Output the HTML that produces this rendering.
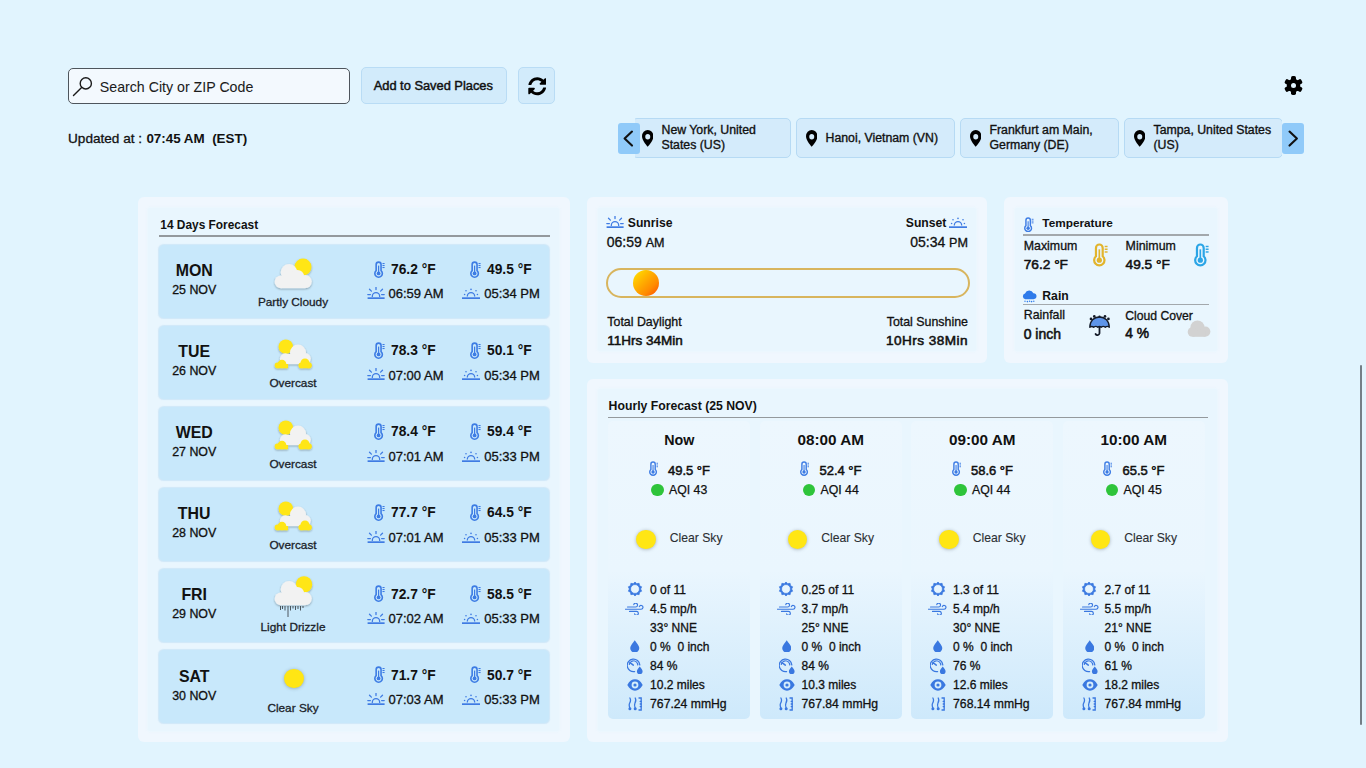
<!DOCTYPE html><html><head><meta charset="utf-8"><style>html,body{margin:0;padding:0;width:1366px;height:768px;overflow:hidden;background:#e1f4fe;}body{font-family:"Liberation Sans", sans-serif;position:relative;}.t{position:absolute;white-space:nowrap;line-height:1;}</style></head><body>
<div style="position:absolute;left:68px;top:68px;width:282px;height:36px;box-sizing:border-box;border:1.5px solid #4e555c;border-radius:5px;background:#f3f9fe;"></div>
<svg style="position:absolute;left:72px;top:76px;" width="22" height="22" viewBox="0 0 22 22"><circle cx="13.8" cy="7.4" r="5.6" fill="none" stroke="#1a1a1a" stroke-width="1.4"/><line x1="9.6" y1="11.6" x2="1.5" y2="19.6" stroke="#1a1a1a" stroke-width="1.4" stroke-linecap="round"/></svg>
<div class="t" style="left:99.80px;top:79.98px;font-size:14.2px;font-weight:400;color:#1c1c1c;-webkit-text-stroke:0.05px #1c1c1c;">Search City or ZIP Code</div>
<div style="position:absolute;left:361px;top:67px;width:146px;height:37px;box-sizing:border-box;border:1px solid #b9dcf5;border-radius:5px;background:#d2ebfb;"></div>
<div class="t" style="left:373.70px;top:79.72px;font-size:12.85px;font-weight:400;color:#111;-webkit-text-stroke:0.45px #111;">Add to Saved Places</div>
<div style="position:absolute;left:518px;top:67px;width:37px;height:37px;box-sizing:border-box;border:1px solid #b9dcf5;border-radius:5px;background:#d2ebfb;"></div>
<svg style="position:absolute;left:527.5px;top:77.3px;" width="18.5" height="18.5" viewBox="0 0 512 512"><path fill="#000" d="M370.72 133.28C339.458 104.008 298.888 87.962 255.848 88c-77.458.068-144.328 53.178-162.791 126.85-1.344 5.363-6.122 9.15-11.651 9.15H24.103c-7.498 0-13.194-6.807-11.807-14.176C33.933 94.924 134.813 8 256 8c66.448 0 126.791 26.136 171.315 68.685L463.03 40.97C478.149 25.851 504 36.559 504 57.941V192c0 13.255-10.745 24-24 24H345.941c-21.382 0-32.09-25.851-16.971-40.971l41.75-41.749zM32 296h134.059c21.382 0 32.09 25.851 16.971 40.971l-41.75 41.75c31.262 29.273 71.835 45.319 114.876 45.28 77.418-.07 144.315-53.144 162.787-126.849 1.344-5.363 6.122-9.15 11.651-9.15h57.304c7.498 0 13.194 6.807 11.807 14.176C478.067 417.076 377.187 504 256 504c-66.448 0-126.791-26.136-171.315-68.685L48.97 471.03C33.851 486.149 8 475.441 8 454.059V320c0-13.255 10.745-24 24-24z"/></svg>
<div class="t" style="left:68.00px;top:132.19px;font-size:13.6px;font-weight:400;color:#111;-webkit-text-stroke:0.3px #111;">Updated at :</div>
<div class="t" style="left:146.40px;top:132.36px;font-size:13.4px;font-weight:700;color:#111;">07:45 AM&nbsp;&nbsp;(EST)</div>
<svg style="position:absolute;left:1284.4px;top:76.2px;" width="19" height="19" viewBox="-9.5 -9.5 19 19"><g fill="#000"><rect x="-2.5" y="-9.5" width="5" height="6" rx="1.7" transform="rotate(0)"/><rect x="-2.5" y="-9.5" width="5" height="6" rx="1.7" transform="rotate(60)"/><rect x="-2.5" y="-9.5" width="5" height="6" rx="1.7" transform="rotate(120)"/><rect x="-2.5" y="-9.5" width="5" height="6" rx="1.7" transform="rotate(180)"/><rect x="-2.5" y="-9.5" width="5" height="6" rx="1.7" transform="rotate(240)"/><rect x="-2.5" y="-9.5" width="5" height="6" rx="1.7" transform="rotate(300)"/><circle r="6.7"/></g><circle r="2.5" fill="#e1f4fe"/></svg>
<div style="position:absolute;left:635px;top:110px;width:647px;height:56px;overflow:hidden">
<div style="position:absolute;left:-3.5px;top:8.3px;width:159px;height:40px;box-sizing:border-box;border:1.5px solid #b6daf4;border-radius:5px;background:#d4ebfb"></div>
<div style="position:absolute;left:160.5px;top:8.3px;width:159px;height:40px;box-sizing:border-box;border:1.5px solid #b6daf4;border-radius:5px;background:#d4ebfb"></div>
<div style="position:absolute;left:324.5px;top:8.3px;width:159px;height:40px;box-sizing:border-box;border:1.5px solid #b6daf4;border-radius:5px;background:#d4ebfb"></div>
<div style="position:absolute;left:488.5px;top:8.3px;width:159px;height:40px;box-sizing:border-box;border:1.5px solid #b6daf4;border-radius:5px;background:#d4ebfb"></div>
</div>
<svg style="position:absolute;left:641.70px;top:130px;" width="11.5" height="16.8" viewBox="0 0 12 16" preserveAspectRatio="none"><path fill="#000" d="M6 16s6-5.686 6-10A6 6 0 0 0 0 6c0 4.314 6 10 6 10zm0-7a2.6 2.6 0 1 1 0-5.2 2.6 2.6 0 0 1 0 5.2z"/></svg>
<div class="t" style="left:661.50px;top:124.09px;font-size:12.3px;font-weight:400;color:#111;-webkit-text-stroke:0.35px #111;">New York, United</div>
<div class="t" style="left:661.50px;top:139.09px;font-size:12.3px;font-weight:400;color:#111;-webkit-text-stroke:0.35px #111;">States (US)</div>
<svg style="position:absolute;left:805.70px;top:130px;" width="11.5" height="16.8" viewBox="0 0 12 16" preserveAspectRatio="none"><path fill="#000" d="M6 16s6-5.686 6-10A6 6 0 0 0 0 6c0 4.314 6 10 6 10zm0-7a2.6 2.6 0 1 1 0-5.2 2.6 2.6 0 0 1 0 5.2z"/></svg>
<div class="t" style="left:825.50px;top:131.89px;font-size:12.3px;font-weight:400;color:#111;-webkit-text-stroke:0.35px #111;">Hanoi, Vietnam (VN)</div>
<svg style="position:absolute;left:969.70px;top:130px;" width="11.5" height="16.8" viewBox="0 0 12 16" preserveAspectRatio="none"><path fill="#000" d="M6 16s6-5.686 6-10A6 6 0 0 0 0 6c0 4.314 6 10 6 10zm0-7a2.6 2.6 0 1 1 0-5.2 2.6 2.6 0 0 1 0 5.2z"/></svg>
<div class="t" style="left:989.50px;top:124.09px;font-size:12.3px;font-weight:400;color:#111;-webkit-text-stroke:0.35px #111;">Frankfurt am Main,</div>
<div class="t" style="left:989.50px;top:139.09px;font-size:12.3px;font-weight:400;color:#111;-webkit-text-stroke:0.35px #111;">Germany (DE)</div>
<svg style="position:absolute;left:1133.70px;top:130px;" width="11.5" height="16.8" viewBox="0 0 12 16" preserveAspectRatio="none"><path fill="#000" d="M6 16s6-5.686 6-10A6 6 0 0 0 0 6c0 4.314 6 10 6 10zm0-7a2.6 2.6 0 1 1 0-5.2 2.6 2.6 0 0 1 0 5.2z"/></svg>
<div class="t" style="left:1153.50px;top:124.09px;font-size:12.3px;font-weight:400;color:#111;-webkit-text-stroke:0.35px #111;">Tampa, United States</div>
<div class="t" style="left:1153.50px;top:139.09px;font-size:12.3px;font-weight:400;color:#111;-webkit-text-stroke:0.35px #111;">(US)</div>
<div style="position:absolute;left:618.2px;top:123.2px;width:21.5px;height:30.8px;background:#90caf9;border-radius:3px;"></div>
<svg style="position:absolute;left:618.2px;top:123.2px;" width="21.5" height="30.8" viewBox="0 0 21.5 30.8"><polyline points="14,8.6 6.6,15.6 14,22.6" fill="none" stroke="#111" stroke-width="2.1" stroke-linecap="round" stroke-linejoin="round"/></svg>
<div style="position:absolute;left:1282px;top:123.2px;width:21.5px;height:30.8px;background:#90caf9;border-radius:3px;"></div>
<svg style="position:absolute;left:1282px;top:123.2px;" width="21.5" height="30.8" viewBox="0 0 21.5 30.8"><polyline points="7.5,8.6 14.9,15.6 7.5,22.6" fill="none" stroke="#111" stroke-width="2.1" stroke-linecap="round" stroke-linejoin="round"/></svg>
<div style="position:absolute;left:137.5px;top:197px;width:432.5px;height:545px;box-sizing:border-box;border-radius:6px;background:#f0f7fe;"></div>
<div style="position:absolute;left:148.0px;top:207.5px;width:411.0px;height:523px;background:#e9f6fe;border-radius:2px;box-shadow:0 0 2px 1px rgba(233,246,254,0.8);"></div>
<div style="position:absolute;left:587px;top:197px;width:400px;height:165.5px;box-sizing:border-box;border-radius:6px;background:#f0f7fe;"></div>
<div style="position:absolute;left:597.5px;top:207.5px;width:378.5px;height:143.5px;background:#e9f6fe;border-radius:2px;box-shadow:0 0 2px 1px rgba(233,246,254,0.8);"></div>
<div style="position:absolute;left:1004px;top:197px;width:224px;height:165.5px;box-sizing:border-box;border-radius:6px;background:#f0f7fe;"></div>
<div style="position:absolute;left:1014.5px;top:207.5px;width:202.5px;height:143.5px;background:#e9f6fe;border-radius:2px;box-shadow:0 0 2px 1px rgba(233,246,254,0.8);"></div>
<div style="position:absolute;left:587px;top:378.5px;width:641px;height:363.5px;box-sizing:border-box;border-radius:6px;background:#f0f7fe;"></div>
<div style="position:absolute;left:597.5px;top:389.0px;width:619.5px;height:341.5px;background:#e9f6fe;border-radius:2px;box-shadow:0 0 2px 1px rgba(233,246,254,0.8);"></div>
<div class="t" style="left:160.30px;top:219.53px;font-size:11.9px;font-weight:700;color:#111;">14 Days Forecast</div>
<div style="position:absolute;left:159px;top:235.2px;width:391px;height:1.4px;background:#94999d;"></div>
<div style="position:absolute;left:159.4px;top:244.70px;width:389.2px;height:73.3px;border-radius:5px;background:#c8e8fb;box-shadow:0 0 1px 0.5px rgba(150,200,235,0.3);"></div>
<div style="position:absolute;left:159.4px;top:325.80px;width:389.2px;height:73.3px;border-radius:5px;background:#c8e8fb;box-shadow:0 0 1px 0.5px rgba(150,200,235,0.3);"></div>
<div style="position:absolute;left:159.4px;top:406.90px;width:389.2px;height:73.3px;border-radius:5px;background:#c8e8fb;box-shadow:0 0 1px 0.5px rgba(150,200,235,0.3);"></div>
<div style="position:absolute;left:159.4px;top:488.00px;width:389.2px;height:73.3px;border-radius:5px;background:#c8e8fb;box-shadow:0 0 1px 0.5px rgba(150,200,235,0.3);"></div>
<div style="position:absolute;left:159.4px;top:569.10px;width:389.2px;height:73.3px;border-radius:5px;background:#c8e8fb;box-shadow:0 0 1px 0.5px rgba(150,200,235,0.3);"></div>
<div style="position:absolute;left:159.4px;top:650.20px;width:389.2px;height:73.3px;border-radius:5px;background:#c8e8fb;box-shadow:0 0 1px 0.5px rgba(150,200,235,0.3);"></div>
<div class="t" style="left:-5.80px;width:400px;text-align:center;top:263.04px;font-size:15.9px;font-weight:700;color:#111;">MON</div>
<div class="t" style="left:-5.80px;width:400px;text-align:center;top:284.00px;font-size:12.4px;font-weight:400;color:#111;-webkit-text-stroke:0.3px #111;">25 NOV</div>
<svg style="position:absolute;left:273px;top:256.70px;" width="42" height="36" viewBox="0 0 42 36"><defs><filter id="f1" x="-30%" y="-30%" width="160%" height="160%"><feGaussianBlur in="SourceAlpha" stdDeviation="1.3"/><feOffset dy="0.9"/><feComponentTransfer><feFuncA type="linear" slope="0.33"/></feComponentTransfer><feMerge><feMergeNode/><feMergeNode in="SourceGraphic"/></feMerge></filter></defs><g filter="url(#f1)"><circle cx="30" cy="9.9" r="8.5" fill="#ffe614"/><g fill="#f2f2f2"><circle cx="16" cy="15.3" r="8.3"/><circle cx="8" cy="24.8" r="6.4"/><circle cx="32.3" cy="24.6" r="6.5"/><circle cx="24.5" cy="19.5" r="6.6"/><rect x="8" y="19" width="24.3" height="12.2"/></g></g></svg>
<div class="t" style="left:93.00px;width:400px;text-align:center;top:297.11px;font-size:11.8px;font-weight:400;color:#1a2229;-webkit-text-stroke:0.3px #1a2229;">Partly Cloudy</div>
<div class="t" style="left:305px;width:200px;top:260.30px;display:flex;justify-content:center;align-items:center;height:18px"><svg width="10.60" height="17" viewBox="0 0 10.6 17" style="margin-right:6px;flex:none"><path d="M2.15,9.61 V3.55 A2.45,2.45 0 0 1 7.05,3.55 V9.61 A3.75,3.75 0 1 1 2.15,9.61 Z" fill="none" stroke="#3d7ce4" stroke-width="1.6"/><line x1="4.6" y1="4.6" x2="4.6" y2="12" stroke="#3d7ce4" stroke-width="1.2"/><circle cx="4.6" cy="12.45" r="1.9" fill="#3d7ce4"/><rect x="8.5" y="2.0" width="2.1" height="1.05" fill="#3d7ce4"/><rect x="8.5" y="4.0" width="2.1" height="1.05" fill="#3d7ce4"/><rect x="8.5" y="6.0" width="2.1" height="1.05" fill="#3d7ce4"/></svg><span style="font-size:13.8px;font-weight:700;color:#111;position:relative;top:0.8px">76.2 °F</span></div>
<div class="t" style="left:305px;width:200px;top:285.30px;display:flex;justify-content:center;align-items:flex-end;height:14px"><svg width="18" height="12" viewBox="0 0 18 12" style="margin-right:4px"><g stroke="#3f7be3" stroke-linecap="round" fill="none"><line x1="0.6" y1="11.2" x2="17.6" y2="11.2" stroke-width="1.8" stroke-linecap="butt"/><path d="M5.3,9.4 A3.7,3.7 0 0 1 12.7,9.4" stroke-width="1.3"/><line x1="9" y1="0.3" x2="9" y2="2.6" stroke-width="1.3"/><line x1="2.5" y1="2.3" x2="4.4" y2="4.1" stroke-width="1.3"/><line x1="15.5" y1="2.3" x2="13.6" y2="4.1" stroke-width="1.3"/><line x1="0.8" y1="7.6" x2="3.4" y2="7.6" stroke-width="1.3"/><line x1="14.6" y1="7.6" x2="17.2" y2="7.6" stroke-width="1.3"/></g></svg><span style="font-size:13px;font-weight:400;color:#111;line-height:1;position:relative;top:1.2px;-webkit-text-stroke:0.3px #111">06:59 AM</span></div>
<div class="t" style="left:401px;width:200px;top:260.30px;display:flex;justify-content:center;align-items:center;height:18px"><svg width="10.60" height="17" viewBox="0 0 10.6 17" style="margin-right:6px;flex:none"><path d="M2.15,9.61 V3.55 A2.45,2.45 0 0 1 7.05,3.55 V9.61 A3.75,3.75 0 1 1 2.15,9.61 Z" fill="none" stroke="#3d7ce4" stroke-width="1.6"/><line x1="4.6" y1="4.6" x2="4.6" y2="12" stroke="#3d7ce4" stroke-width="1.2"/><circle cx="4.6" cy="12.45" r="1.9" fill="#3d7ce4"/><rect x="8.5" y="2.0" width="2.1" height="1.05" fill="#3d7ce4"/><rect x="8.5" y="4.0" width="2.1" height="1.05" fill="#3d7ce4"/><rect x="8.5" y="6.0" width="2.1" height="1.05" fill="#3d7ce4"/></svg><span style="font-size:13.8px;font-weight:700;color:#111;position:relative;top:0.8px">49.5 °F</span></div>
<div class="t" style="left:401px;width:200px;top:285.30px;display:flex;justify-content:center;align-items:flex-end;height:14px"><svg width="18" height="12" viewBox="0 0 18 12" style="margin-right:4px"><g fill="#3f7be3"><rect x="0" y="10.3" width="18" height="1.8"/><path d="M5.3,9.4 A3.7,3.7 0 0 1 12.7,9.4" stroke="#3f7be3" stroke-width="1.3" fill="none"/><circle cx="9" cy="2.4" r="0.8"/><circle cx="4" cy="3.8" r="0.8"/><circle cx="14" cy="3.8" r="0.8"/><circle cx="2.6" cy="7.5" r="0.8"/><circle cx="15.4" cy="7.5" r="0.8"/></g></svg><span style="font-size:13px;font-weight:400;color:#111;line-height:1;position:relative;top:1.2px;-webkit-text-stroke:0.3px #111">05:34 PM</span></div>
<div class="t" style="left:-5.80px;width:400px;text-align:center;top:344.14px;font-size:15.9px;font-weight:700;color:#111;">TUE</div>
<div class="t" style="left:-5.80px;width:400px;text-align:center;top:365.10px;font-size:12.4px;font-weight:400;color:#111;-webkit-text-stroke:0.3px #111;">26 NOV</div>
<svg style="position:absolute;left:273px;top:335.80px;" width="42" height="36" viewBox="0 0 42 36"><defs><filter id="f2" x="-30%" y="-30%" width="160%" height="160%"><feGaussianBlur in="SourceAlpha" stdDeviation="1.3"/><feOffset dy="0.9"/><feComponentTransfer><feFuncA type="linear" slope="0.33"/></feComponentTransfer><feMerge><feMergeNode/><feMergeNode in="SourceGraphic"/></feMerge></filter></defs><g filter="url(#f2)"><circle cx="12.8" cy="10.7" r="7.2" fill="#ffe614"/><g fill="#f2f2f2"><circle cx="25" cy="16.6" r="8"/><circle cx="12.3" cy="22.7" r="5.4"/><circle cx="32.3" cy="22.6" r="5.5"/><rect x="12.3" y="18" width="20" height="10.1"/></g><g fill="#ffe614"><circle cx="9" cy="28" r="4.2"/><circle cx="4.5" cy="29.4" r="2.8"/><rect x="4.5" y="28" width="10.5" height="4.2"/><circle cx="13" cy="30" r="2.2"/></g><g fill="#ffe614"><circle cx="32" cy="27" r="4.5"/><circle cx="28.3" cy="29.4" r="2.8"/><circle cx="36" cy="29.4" r="2.8"/><rect x="28.3" y="27" width="7.7" height="5.2"/></g></g></svg>
<div class="t" style="left:93.00px;width:400px;text-align:center;top:378.21px;font-size:11.8px;font-weight:400;color:#1a2229;-webkit-text-stroke:0.3px #1a2229;">Overcast</div>
<div class="t" style="left:305px;width:200px;top:341.40px;display:flex;justify-content:center;align-items:center;height:18px"><svg width="10.60" height="17" viewBox="0 0 10.6 17" style="margin-right:6px;flex:none"><path d="M2.15,9.61 V3.55 A2.45,2.45 0 0 1 7.05,3.55 V9.61 A3.75,3.75 0 1 1 2.15,9.61 Z" fill="none" stroke="#3d7ce4" stroke-width="1.6"/><line x1="4.6" y1="4.6" x2="4.6" y2="12" stroke="#3d7ce4" stroke-width="1.2"/><circle cx="4.6" cy="12.45" r="1.9" fill="#3d7ce4"/><rect x="8.5" y="2.0" width="2.1" height="1.05" fill="#3d7ce4"/><rect x="8.5" y="4.0" width="2.1" height="1.05" fill="#3d7ce4"/><rect x="8.5" y="6.0" width="2.1" height="1.05" fill="#3d7ce4"/></svg><span style="font-size:13.8px;font-weight:700;color:#111;position:relative;top:0.8px">78.3 °F</span></div>
<div class="t" style="left:305px;width:200px;top:366.40px;display:flex;justify-content:center;align-items:flex-end;height:14px"><svg width="18" height="12" viewBox="0 0 18 12" style="margin-right:4px"><g stroke="#3f7be3" stroke-linecap="round" fill="none"><line x1="0.6" y1="11.2" x2="17.6" y2="11.2" stroke-width="1.8" stroke-linecap="butt"/><path d="M5.3,9.4 A3.7,3.7 0 0 1 12.7,9.4" stroke-width="1.3"/><line x1="9" y1="0.3" x2="9" y2="2.6" stroke-width="1.3"/><line x1="2.5" y1="2.3" x2="4.4" y2="4.1" stroke-width="1.3"/><line x1="15.5" y1="2.3" x2="13.6" y2="4.1" stroke-width="1.3"/><line x1="0.8" y1="7.6" x2="3.4" y2="7.6" stroke-width="1.3"/><line x1="14.6" y1="7.6" x2="17.2" y2="7.6" stroke-width="1.3"/></g></svg><span style="font-size:13px;font-weight:400;color:#111;line-height:1;position:relative;top:1.2px;-webkit-text-stroke:0.3px #111">07:00 AM</span></div>
<div class="t" style="left:401px;width:200px;top:341.40px;display:flex;justify-content:center;align-items:center;height:18px"><svg width="10.60" height="17" viewBox="0 0 10.6 17" style="margin-right:6px;flex:none"><path d="M2.15,9.61 V3.55 A2.45,2.45 0 0 1 7.05,3.55 V9.61 A3.75,3.75 0 1 1 2.15,9.61 Z" fill="none" stroke="#3d7ce4" stroke-width="1.6"/><line x1="4.6" y1="4.6" x2="4.6" y2="12" stroke="#3d7ce4" stroke-width="1.2"/><circle cx="4.6" cy="12.45" r="1.9" fill="#3d7ce4"/><rect x="8.5" y="2.0" width="2.1" height="1.05" fill="#3d7ce4"/><rect x="8.5" y="4.0" width="2.1" height="1.05" fill="#3d7ce4"/><rect x="8.5" y="6.0" width="2.1" height="1.05" fill="#3d7ce4"/></svg><span style="font-size:13.8px;font-weight:700;color:#111;position:relative;top:0.8px">50.1 °F</span></div>
<div class="t" style="left:401px;width:200px;top:366.40px;display:flex;justify-content:center;align-items:flex-end;height:14px"><svg width="18" height="12" viewBox="0 0 18 12" style="margin-right:4px"><g fill="#3f7be3"><rect x="0" y="10.3" width="18" height="1.8"/><path d="M5.3,9.4 A3.7,3.7 0 0 1 12.7,9.4" stroke="#3f7be3" stroke-width="1.3" fill="none"/><circle cx="9" cy="2.4" r="0.8"/><circle cx="4" cy="3.8" r="0.8"/><circle cx="14" cy="3.8" r="0.8"/><circle cx="2.6" cy="7.5" r="0.8"/><circle cx="15.4" cy="7.5" r="0.8"/></g></svg><span style="font-size:13px;font-weight:400;color:#111;line-height:1;position:relative;top:1.2px;-webkit-text-stroke:0.3px #111">05:34 PM</span></div>
<div class="t" style="left:-5.80px;width:400px;text-align:center;top:425.24px;font-size:15.9px;font-weight:700;color:#111;">WED</div>
<div class="t" style="left:-5.80px;width:400px;text-align:center;top:446.20px;font-size:12.4px;font-weight:400;color:#111;-webkit-text-stroke:0.3px #111;">27 NOV</div>
<svg style="position:absolute;left:273px;top:416.90px;" width="42" height="36" viewBox="0 0 42 36"><defs><filter id="f3" x="-30%" y="-30%" width="160%" height="160%"><feGaussianBlur in="SourceAlpha" stdDeviation="1.3"/><feOffset dy="0.9"/><feComponentTransfer><feFuncA type="linear" slope="0.33"/></feComponentTransfer><feMerge><feMergeNode/><feMergeNode in="SourceGraphic"/></feMerge></filter></defs><g filter="url(#f3)"><circle cx="12.8" cy="10.7" r="7.2" fill="#ffe614"/><g fill="#f2f2f2"><circle cx="25" cy="16.6" r="8"/><circle cx="12.3" cy="22.7" r="5.4"/><circle cx="32.3" cy="22.6" r="5.5"/><rect x="12.3" y="18" width="20" height="10.1"/></g><g fill="#ffe614"><circle cx="9" cy="28" r="4.2"/><circle cx="4.5" cy="29.4" r="2.8"/><rect x="4.5" y="28" width="10.5" height="4.2"/><circle cx="13" cy="30" r="2.2"/></g><g fill="#ffe614"><circle cx="32" cy="27" r="4.5"/><circle cx="28.3" cy="29.4" r="2.8"/><circle cx="36" cy="29.4" r="2.8"/><rect x="28.3" y="27" width="7.7" height="5.2"/></g></g></svg>
<div class="t" style="left:93.00px;width:400px;text-align:center;top:459.31px;font-size:11.8px;font-weight:400;color:#1a2229;-webkit-text-stroke:0.3px #1a2229;">Overcast</div>
<div class="t" style="left:305px;width:200px;top:422.50px;display:flex;justify-content:center;align-items:center;height:18px"><svg width="10.60" height="17" viewBox="0 0 10.6 17" style="margin-right:6px;flex:none"><path d="M2.15,9.61 V3.55 A2.45,2.45 0 0 1 7.05,3.55 V9.61 A3.75,3.75 0 1 1 2.15,9.61 Z" fill="none" stroke="#3d7ce4" stroke-width="1.6"/><line x1="4.6" y1="4.6" x2="4.6" y2="12" stroke="#3d7ce4" stroke-width="1.2"/><circle cx="4.6" cy="12.45" r="1.9" fill="#3d7ce4"/><rect x="8.5" y="2.0" width="2.1" height="1.05" fill="#3d7ce4"/><rect x="8.5" y="4.0" width="2.1" height="1.05" fill="#3d7ce4"/><rect x="8.5" y="6.0" width="2.1" height="1.05" fill="#3d7ce4"/></svg><span style="font-size:13.8px;font-weight:700;color:#111;position:relative;top:0.8px">78.4 °F</span></div>
<div class="t" style="left:305px;width:200px;top:447.50px;display:flex;justify-content:center;align-items:flex-end;height:14px"><svg width="18" height="12" viewBox="0 0 18 12" style="margin-right:4px"><g stroke="#3f7be3" stroke-linecap="round" fill="none"><line x1="0.6" y1="11.2" x2="17.6" y2="11.2" stroke-width="1.8" stroke-linecap="butt"/><path d="M5.3,9.4 A3.7,3.7 0 0 1 12.7,9.4" stroke-width="1.3"/><line x1="9" y1="0.3" x2="9" y2="2.6" stroke-width="1.3"/><line x1="2.5" y1="2.3" x2="4.4" y2="4.1" stroke-width="1.3"/><line x1="15.5" y1="2.3" x2="13.6" y2="4.1" stroke-width="1.3"/><line x1="0.8" y1="7.6" x2="3.4" y2="7.6" stroke-width="1.3"/><line x1="14.6" y1="7.6" x2="17.2" y2="7.6" stroke-width="1.3"/></g></svg><span style="font-size:13px;font-weight:400;color:#111;line-height:1;position:relative;top:1.2px;-webkit-text-stroke:0.3px #111">07:01 AM</span></div>
<div class="t" style="left:401px;width:200px;top:422.50px;display:flex;justify-content:center;align-items:center;height:18px"><svg width="10.60" height="17" viewBox="0 0 10.6 17" style="margin-right:6px;flex:none"><path d="M2.15,9.61 V3.55 A2.45,2.45 0 0 1 7.05,3.55 V9.61 A3.75,3.75 0 1 1 2.15,9.61 Z" fill="none" stroke="#3d7ce4" stroke-width="1.6"/><line x1="4.6" y1="4.6" x2="4.6" y2="12" stroke="#3d7ce4" stroke-width="1.2"/><circle cx="4.6" cy="12.45" r="1.9" fill="#3d7ce4"/><rect x="8.5" y="2.0" width="2.1" height="1.05" fill="#3d7ce4"/><rect x="8.5" y="4.0" width="2.1" height="1.05" fill="#3d7ce4"/><rect x="8.5" y="6.0" width="2.1" height="1.05" fill="#3d7ce4"/></svg><span style="font-size:13.8px;font-weight:700;color:#111;position:relative;top:0.8px">59.4 °F</span></div>
<div class="t" style="left:401px;width:200px;top:447.50px;display:flex;justify-content:center;align-items:flex-end;height:14px"><svg width="18" height="12" viewBox="0 0 18 12" style="margin-right:4px"><g fill="#3f7be3"><rect x="0" y="10.3" width="18" height="1.8"/><path d="M5.3,9.4 A3.7,3.7 0 0 1 12.7,9.4" stroke="#3f7be3" stroke-width="1.3" fill="none"/><circle cx="9" cy="2.4" r="0.8"/><circle cx="4" cy="3.8" r="0.8"/><circle cx="14" cy="3.8" r="0.8"/><circle cx="2.6" cy="7.5" r="0.8"/><circle cx="15.4" cy="7.5" r="0.8"/></g></svg><span style="font-size:13px;font-weight:400;color:#111;line-height:1;position:relative;top:1.2px;-webkit-text-stroke:0.3px #111">05:33 PM</span></div>
<div class="t" style="left:-5.80px;width:400px;text-align:center;top:506.34px;font-size:15.9px;font-weight:700;color:#111;">THU</div>
<div class="t" style="left:-5.80px;width:400px;text-align:center;top:527.30px;font-size:12.4px;font-weight:400;color:#111;-webkit-text-stroke:0.3px #111;">28 NOV</div>
<svg style="position:absolute;left:273px;top:498.00px;" width="42" height="36" viewBox="0 0 42 36"><defs><filter id="f4" x="-30%" y="-30%" width="160%" height="160%"><feGaussianBlur in="SourceAlpha" stdDeviation="1.3"/><feOffset dy="0.9"/><feComponentTransfer><feFuncA type="linear" slope="0.33"/></feComponentTransfer><feMerge><feMergeNode/><feMergeNode in="SourceGraphic"/></feMerge></filter></defs><g filter="url(#f4)"><circle cx="12.8" cy="10.7" r="7.2" fill="#ffe614"/><g fill="#f2f2f2"><circle cx="25" cy="16.6" r="8"/><circle cx="12.3" cy="22.7" r="5.4"/><circle cx="32.3" cy="22.6" r="5.5"/><rect x="12.3" y="18" width="20" height="10.1"/></g><g fill="#ffe614"><circle cx="9" cy="28" r="4.2"/><circle cx="4.5" cy="29.4" r="2.8"/><rect x="4.5" y="28" width="10.5" height="4.2"/><circle cx="13" cy="30" r="2.2"/></g><g fill="#ffe614"><circle cx="32" cy="27" r="4.5"/><circle cx="28.3" cy="29.4" r="2.8"/><circle cx="36" cy="29.4" r="2.8"/><rect x="28.3" y="27" width="7.7" height="5.2"/></g></g></svg>
<div class="t" style="left:93.00px;width:400px;text-align:center;top:540.41px;font-size:11.8px;font-weight:400;color:#1a2229;-webkit-text-stroke:0.3px #1a2229;">Overcast</div>
<div class="t" style="left:305px;width:200px;top:503.60px;display:flex;justify-content:center;align-items:center;height:18px"><svg width="10.60" height="17" viewBox="0 0 10.6 17" style="margin-right:6px;flex:none"><path d="M2.15,9.61 V3.55 A2.45,2.45 0 0 1 7.05,3.55 V9.61 A3.75,3.75 0 1 1 2.15,9.61 Z" fill="none" stroke="#3d7ce4" stroke-width="1.6"/><line x1="4.6" y1="4.6" x2="4.6" y2="12" stroke="#3d7ce4" stroke-width="1.2"/><circle cx="4.6" cy="12.45" r="1.9" fill="#3d7ce4"/><rect x="8.5" y="2.0" width="2.1" height="1.05" fill="#3d7ce4"/><rect x="8.5" y="4.0" width="2.1" height="1.05" fill="#3d7ce4"/><rect x="8.5" y="6.0" width="2.1" height="1.05" fill="#3d7ce4"/></svg><span style="font-size:13.8px;font-weight:700;color:#111;position:relative;top:0.8px">77.7 °F</span></div>
<div class="t" style="left:305px;width:200px;top:528.60px;display:flex;justify-content:center;align-items:flex-end;height:14px"><svg width="18" height="12" viewBox="0 0 18 12" style="margin-right:4px"><g stroke="#3f7be3" stroke-linecap="round" fill="none"><line x1="0.6" y1="11.2" x2="17.6" y2="11.2" stroke-width="1.8" stroke-linecap="butt"/><path d="M5.3,9.4 A3.7,3.7 0 0 1 12.7,9.4" stroke-width="1.3"/><line x1="9" y1="0.3" x2="9" y2="2.6" stroke-width="1.3"/><line x1="2.5" y1="2.3" x2="4.4" y2="4.1" stroke-width="1.3"/><line x1="15.5" y1="2.3" x2="13.6" y2="4.1" stroke-width="1.3"/><line x1="0.8" y1="7.6" x2="3.4" y2="7.6" stroke-width="1.3"/><line x1="14.6" y1="7.6" x2="17.2" y2="7.6" stroke-width="1.3"/></g></svg><span style="font-size:13px;font-weight:400;color:#111;line-height:1;position:relative;top:1.2px;-webkit-text-stroke:0.3px #111">07:01 AM</span></div>
<div class="t" style="left:401px;width:200px;top:503.60px;display:flex;justify-content:center;align-items:center;height:18px"><svg width="10.60" height="17" viewBox="0 0 10.6 17" style="margin-right:6px;flex:none"><path d="M2.15,9.61 V3.55 A2.45,2.45 0 0 1 7.05,3.55 V9.61 A3.75,3.75 0 1 1 2.15,9.61 Z" fill="none" stroke="#3d7ce4" stroke-width="1.6"/><line x1="4.6" y1="4.6" x2="4.6" y2="12" stroke="#3d7ce4" stroke-width="1.2"/><circle cx="4.6" cy="12.45" r="1.9" fill="#3d7ce4"/><rect x="8.5" y="2.0" width="2.1" height="1.05" fill="#3d7ce4"/><rect x="8.5" y="4.0" width="2.1" height="1.05" fill="#3d7ce4"/><rect x="8.5" y="6.0" width="2.1" height="1.05" fill="#3d7ce4"/></svg><span style="font-size:13.8px;font-weight:700;color:#111;position:relative;top:0.8px">64.5 °F</span></div>
<div class="t" style="left:401px;width:200px;top:528.60px;display:flex;justify-content:center;align-items:flex-end;height:14px"><svg width="18" height="12" viewBox="0 0 18 12" style="margin-right:4px"><g fill="#3f7be3"><rect x="0" y="10.3" width="18" height="1.8"/><path d="M5.3,9.4 A3.7,3.7 0 0 1 12.7,9.4" stroke="#3f7be3" stroke-width="1.3" fill="none"/><circle cx="9" cy="2.4" r="0.8"/><circle cx="4" cy="3.8" r="0.8"/><circle cx="14" cy="3.8" r="0.8"/><circle cx="2.6" cy="7.5" r="0.8"/><circle cx="15.4" cy="7.5" r="0.8"/></g></svg><span style="font-size:13px;font-weight:400;color:#111;line-height:1;position:relative;top:1.2px;-webkit-text-stroke:0.3px #111">05:33 PM</span></div>
<div class="t" style="left:-5.80px;width:400px;text-align:center;top:587.44px;font-size:15.9px;font-weight:700;color:#111;">FRI</div>
<div class="t" style="left:-5.80px;width:400px;text-align:center;top:608.40px;font-size:12.4px;font-weight:400;color:#111;-webkit-text-stroke:0.3px #111;">29 NOV</div>
<svg style="position:absolute;left:273px;top:573.60px;" width="42" height="46" viewBox="0 0 42 46"><defs><filter id="f5" x="-30%" y="-30%" width="160%" height="160%"><feGaussianBlur in="SourceAlpha" stdDeviation="1.3"/><feOffset dy="0.9"/><feComponentTransfer><feFuncA type="linear" slope="0.33"/></feComponentTransfer><feMerge><feMergeNode/><feMergeNode in="SourceGraphic"/></feMerge></filter></defs><g filter="url(#f5)"><circle cx="31" cy="10.4" r="8.2" fill="#ffe614"/><g fill="#f2f2f2"><circle cx="16" cy="15.3" r="8.3"/><circle cx="8" cy="24.8" r="6.4"/><circle cx="32.3" cy="24.6" r="6.5"/><circle cx="24.5" cy="19.5" r="6.6"/><rect x="8" y="19" width="24.3" height="12.2"/></g></g><g stroke="#40464c" stroke-width="0.9"><line x1="7.5" y1="32" x2="7.5" y2="36"/><line x1="9.5" y1="32" x2="9.5" y2="35"/><line x1="12" y1="32" x2="12" y2="36.5"/><line x1="15" y1="32" x2="15" y2="43"/><line x1="17.5" y1="32" x2="17.5" y2="36.5"/><line x1="20" y1="32" x2="20" y2="34.5"/><line x1="22.5" y1="32" x2="22.5" y2="36"/><line x1="25" y1="32" x2="25" y2="35"/><line x1="27.5" y1="32" x2="27.5" y2="36.5"/><line x1="30" y1="32" x2="30" y2="34"/></g></svg>
<div class="t" style="left:93.00px;width:400px;text-align:center;top:621.51px;font-size:11.8px;font-weight:400;color:#1a2229;-webkit-text-stroke:0.3px #1a2229;">Light Drizzle</div>
<div class="t" style="left:305px;width:200px;top:584.70px;display:flex;justify-content:center;align-items:center;height:18px"><svg width="10.60" height="17" viewBox="0 0 10.6 17" style="margin-right:6px;flex:none"><path d="M2.15,9.61 V3.55 A2.45,2.45 0 0 1 7.05,3.55 V9.61 A3.75,3.75 0 1 1 2.15,9.61 Z" fill="none" stroke="#3d7ce4" stroke-width="1.6"/><line x1="4.6" y1="4.6" x2="4.6" y2="12" stroke="#3d7ce4" stroke-width="1.2"/><circle cx="4.6" cy="12.45" r="1.9" fill="#3d7ce4"/><rect x="8.5" y="2.0" width="2.1" height="1.05" fill="#3d7ce4"/><rect x="8.5" y="4.0" width="2.1" height="1.05" fill="#3d7ce4"/><rect x="8.5" y="6.0" width="2.1" height="1.05" fill="#3d7ce4"/></svg><span style="font-size:13.8px;font-weight:700;color:#111;position:relative;top:0.8px">72.7 °F</span></div>
<div class="t" style="left:305px;width:200px;top:609.70px;display:flex;justify-content:center;align-items:flex-end;height:14px"><svg width="18" height="12" viewBox="0 0 18 12" style="margin-right:4px"><g stroke="#3f7be3" stroke-linecap="round" fill="none"><line x1="0.6" y1="11.2" x2="17.6" y2="11.2" stroke-width="1.8" stroke-linecap="butt"/><path d="M5.3,9.4 A3.7,3.7 0 0 1 12.7,9.4" stroke-width="1.3"/><line x1="9" y1="0.3" x2="9" y2="2.6" stroke-width="1.3"/><line x1="2.5" y1="2.3" x2="4.4" y2="4.1" stroke-width="1.3"/><line x1="15.5" y1="2.3" x2="13.6" y2="4.1" stroke-width="1.3"/><line x1="0.8" y1="7.6" x2="3.4" y2="7.6" stroke-width="1.3"/><line x1="14.6" y1="7.6" x2="17.2" y2="7.6" stroke-width="1.3"/></g></svg><span style="font-size:13px;font-weight:400;color:#111;line-height:1;position:relative;top:1.2px;-webkit-text-stroke:0.3px #111">07:02 AM</span></div>
<div class="t" style="left:401px;width:200px;top:584.70px;display:flex;justify-content:center;align-items:center;height:18px"><svg width="10.60" height="17" viewBox="0 0 10.6 17" style="margin-right:6px;flex:none"><path d="M2.15,9.61 V3.55 A2.45,2.45 0 0 1 7.05,3.55 V9.61 A3.75,3.75 0 1 1 2.15,9.61 Z" fill="none" stroke="#3d7ce4" stroke-width="1.6"/><line x1="4.6" y1="4.6" x2="4.6" y2="12" stroke="#3d7ce4" stroke-width="1.2"/><circle cx="4.6" cy="12.45" r="1.9" fill="#3d7ce4"/><rect x="8.5" y="2.0" width="2.1" height="1.05" fill="#3d7ce4"/><rect x="8.5" y="4.0" width="2.1" height="1.05" fill="#3d7ce4"/><rect x="8.5" y="6.0" width="2.1" height="1.05" fill="#3d7ce4"/></svg><span style="font-size:13.8px;font-weight:700;color:#111;position:relative;top:0.8px">58.5 °F</span></div>
<div class="t" style="left:401px;width:200px;top:609.70px;display:flex;justify-content:center;align-items:flex-end;height:14px"><svg width="18" height="12" viewBox="0 0 18 12" style="margin-right:4px"><g fill="#3f7be3"><rect x="0" y="10.3" width="18" height="1.8"/><path d="M5.3,9.4 A3.7,3.7 0 0 1 12.7,9.4" stroke="#3f7be3" stroke-width="1.3" fill="none"/><circle cx="9" cy="2.4" r="0.8"/><circle cx="4" cy="3.8" r="0.8"/><circle cx="14" cy="3.8" r="0.8"/><circle cx="2.6" cy="7.5" r="0.8"/><circle cx="15.4" cy="7.5" r="0.8"/></g></svg><span style="font-size:13px;font-weight:400;color:#111;line-height:1;position:relative;top:1.2px;-webkit-text-stroke:0.3px #111">05:33 PM</span></div>
<div class="t" style="left:-5.80px;width:400px;text-align:center;top:668.54px;font-size:15.9px;font-weight:700;color:#111;">SAT</div>
<div class="t" style="left:-5.80px;width:400px;text-align:center;top:689.50px;font-size:12.4px;font-weight:400;color:#111;-webkit-text-stroke:0.3px #111;">30 NOV</div>
<div style="position:absolute;left:283.80px;top:668.60px;width:19.8px;height:19.8px;border-radius:50%;background:#ffe614;box-shadow:0 0.5px 3.5px rgba(80,90,100,0.45)"></div>
<div class="t" style="left:93.00px;width:400px;text-align:center;top:702.61px;font-size:11.8px;font-weight:400;color:#1a2229;-webkit-text-stroke:0.3px #1a2229;">Clear Sky</div>
<div class="t" style="left:305px;width:200px;top:665.80px;display:flex;justify-content:center;align-items:center;height:18px"><svg width="10.60" height="17" viewBox="0 0 10.6 17" style="margin-right:6px;flex:none"><path d="M2.15,9.61 V3.55 A2.45,2.45 0 0 1 7.05,3.55 V9.61 A3.75,3.75 0 1 1 2.15,9.61 Z" fill="none" stroke="#3d7ce4" stroke-width="1.6"/><line x1="4.6" y1="4.6" x2="4.6" y2="12" stroke="#3d7ce4" stroke-width="1.2"/><circle cx="4.6" cy="12.45" r="1.9" fill="#3d7ce4"/><rect x="8.5" y="2.0" width="2.1" height="1.05" fill="#3d7ce4"/><rect x="8.5" y="4.0" width="2.1" height="1.05" fill="#3d7ce4"/><rect x="8.5" y="6.0" width="2.1" height="1.05" fill="#3d7ce4"/></svg><span style="font-size:13.8px;font-weight:700;color:#111;position:relative;top:0.8px">71.7 °F</span></div>
<div class="t" style="left:305px;width:200px;top:690.80px;display:flex;justify-content:center;align-items:flex-end;height:14px"><svg width="18" height="12" viewBox="0 0 18 12" style="margin-right:4px"><g stroke="#3f7be3" stroke-linecap="round" fill="none"><line x1="0.6" y1="11.2" x2="17.6" y2="11.2" stroke-width="1.8" stroke-linecap="butt"/><path d="M5.3,9.4 A3.7,3.7 0 0 1 12.7,9.4" stroke-width="1.3"/><line x1="9" y1="0.3" x2="9" y2="2.6" stroke-width="1.3"/><line x1="2.5" y1="2.3" x2="4.4" y2="4.1" stroke-width="1.3"/><line x1="15.5" y1="2.3" x2="13.6" y2="4.1" stroke-width="1.3"/><line x1="0.8" y1="7.6" x2="3.4" y2="7.6" stroke-width="1.3"/><line x1="14.6" y1="7.6" x2="17.2" y2="7.6" stroke-width="1.3"/></g></svg><span style="font-size:13px;font-weight:400;color:#111;line-height:1;position:relative;top:1.2px;-webkit-text-stroke:0.3px #111">07:03 AM</span></div>
<div class="t" style="left:401px;width:200px;top:665.80px;display:flex;justify-content:center;align-items:center;height:18px"><svg width="10.60" height="17" viewBox="0 0 10.6 17" style="margin-right:6px;flex:none"><path d="M2.15,9.61 V3.55 A2.45,2.45 0 0 1 7.05,3.55 V9.61 A3.75,3.75 0 1 1 2.15,9.61 Z" fill="none" stroke="#3d7ce4" stroke-width="1.6"/><line x1="4.6" y1="4.6" x2="4.6" y2="12" stroke="#3d7ce4" stroke-width="1.2"/><circle cx="4.6" cy="12.45" r="1.9" fill="#3d7ce4"/><rect x="8.5" y="2.0" width="2.1" height="1.05" fill="#3d7ce4"/><rect x="8.5" y="4.0" width="2.1" height="1.05" fill="#3d7ce4"/><rect x="8.5" y="6.0" width="2.1" height="1.05" fill="#3d7ce4"/></svg><span style="font-size:13.8px;font-weight:700;color:#111;position:relative;top:0.8px">50.7 °F</span></div>
<div class="t" style="left:401px;width:200px;top:690.80px;display:flex;justify-content:center;align-items:flex-end;height:14px"><svg width="18" height="12" viewBox="0 0 18 12" style="margin-right:4px"><g fill="#3f7be3"><rect x="0" y="10.3" width="18" height="1.8"/><path d="M5.3,9.4 A3.7,3.7 0 0 1 12.7,9.4" stroke="#3f7be3" stroke-width="1.3" fill="none"/><circle cx="9" cy="2.4" r="0.8"/><circle cx="4" cy="3.8" r="0.8"/><circle cx="14" cy="3.8" r="0.8"/><circle cx="2.6" cy="7.5" r="0.8"/><circle cx="15.4" cy="7.5" r="0.8"/></g></svg><span style="font-size:13px;font-weight:400;color:#111;line-height:1;position:relative;top:1.2px;-webkit-text-stroke:0.3px #111">05:33 PM</span></div>
<svg style="position:absolute;left:606px;top:216px;" width="18" height="12.00" viewBox="0 0 18 12"><g stroke="#3f7be3" stroke-linecap="round" fill="none"><line x1="0.6" y1="11.2" x2="17.6" y2="11.2" stroke-width="1.8" stroke-linecap="butt"/><path d="M5.3,9.4 A3.7,3.7 0 0 1 12.7,9.4" stroke-width="1.3"/><line x1="9" y1="0.3" x2="9" y2="2.6" stroke-width="1.3"/><line x1="2.5" y1="2.3" x2="4.4" y2="4.1" stroke-width="1.3"/><line x1="15.5" y1="2.3" x2="13.6" y2="4.1" stroke-width="1.3"/><line x1="0.8" y1="7.6" x2="3.4" y2="7.6" stroke-width="1.3"/><line x1="14.6" y1="7.6" x2="17.2" y2="7.6" stroke-width="1.3"/></g></svg>
<div class="t" style="left:627.80px;top:217.47px;font-size:12.2px;font-weight:700;color:#111;">Sunrise</div>
<div class="t" style="left:606.70px;top:234.85px;font-size:14px;font-weight:400;color:#111;-webkit-text-stroke:0.3px #111;">06:59 <span style="font-size:12.6px">AM</span></div>
<div class="t" style="right:419.60px;top:217.47px;font-size:12.2px;font-weight:700;color:#111;text-align:right;">Sunset</div>
<svg style="position:absolute;left:949px;top:216px;" width="18" height="12.00" viewBox="0 0 18 12"><g fill="#3f7be3"><rect x="0" y="10.3" width="18" height="1.8"/><path d="M5.3,9.4 A3.7,3.7 0 0 1 12.7,9.4" stroke="#3f7be3" stroke-width="1.3" fill="none"/><circle cx="9" cy="2.4" r="0.8"/><circle cx="4" cy="3.8" r="0.8"/><circle cx="14" cy="3.8" r="0.8"/><circle cx="2.6" cy="7.5" r="0.8"/><circle cx="15.4" cy="7.5" r="0.8"/></g></svg>
<div class="t" style="right:398.00px;top:234.85px;font-size:14px;font-weight:400;color:#111;text-align:right;-webkit-text-stroke:0.3px #111;">05:34 <span style="font-size:12.6px">PM</span></div>
<div style="position:absolute;left:606px;top:268.2px;width:364px;height:30px;box-sizing:border-box;border:2px solid #d8b55e;border-radius:15px;"></div>
<div style="position:absolute;left:632.8px;top:270.1px;width:26px;height:26px;border-radius:50%;background:linear-gradient(135deg,#ffe600 0%,#ffb000 40%,#ff8a00 70%,#ff4a00 100%)"></div>
<div class="t" style="left:607.30px;top:316.30px;font-size:12.4px;font-weight:400;color:#111;-webkit-text-stroke:0.3px #111;">Total Daylight</div>
<div class="t" style="left:607.30px;top:334.37px;font-size:13.5px;font-weight:400;color:#111;-webkit-text-stroke:0.55px #111;">11Hrs 34Min</div>
<div class="t" style="right:398.00px;top:316.30px;font-size:12.4px;font-weight:400;color:#111;text-align:right;-webkit-text-stroke:0.3px #111;">Total Sunshine</div>
<div class="t" style="right:398.00px;top:334.29px;font-size:13.6px;font-weight:400;color:#111;text-align:right;-webkit-text-stroke:0.55px #111;letter-spacing:0.45px;">10Hrs 38Min</div>
<svg style="position:absolute;left:1024.1px;top:216.6px;" width="9.54" height="15.3" viewBox="0 0 10.6 17"><path d="M2.15,9.61 V3.55 A2.45,2.45 0 0 1 7.05,3.55 V9.61 A3.75,3.75 0 1 1 2.15,9.61 Z" fill="none" stroke="#3d7ce4" stroke-width="1.6"/><line x1="4.6" y1="4.6" x2="4.6" y2="12" stroke="#3d7ce4" stroke-width="1.2"/><circle cx="4.6" cy="12.45" r="1.9" fill="#3d7ce4"/><rect x="8.5" y="2.0" width="2.1" height="1.05" fill="#3d7ce4"/><rect x="8.5" y="4.0" width="2.1" height="1.05" fill="#3d7ce4"/><rect x="8.5" y="6.0" width="2.1" height="1.05" fill="#3d7ce4"/></svg>
<div class="t" style="left:1042.30px;top:218.21px;font-size:11.8px;font-weight:700;color:#111;">Temperature</div>
<div style="position:absolute;left:1023.2px;top:234.3px;width:185.5px;height:1.4px;background:#a3a8ac;"></div>
<div class="t" style="left:1023.70px;top:239.60px;font-size:12.4px;font-weight:400;color:#111;-webkit-text-stroke:0.3px #111;">Maximum</div>
<div class="t" style="left:1023.70px;top:257.80px;font-size:13.7px;font-weight:400;color:#111;-webkit-text-stroke:0.55px #111;">76.2 °F</div>
<svg style="position:absolute;left:1093.2px;top:243.2px;" width="14.59" height="23.4" viewBox="0 0 10.6 17"><path d="M2.15,9.61 V3.55 A2.45,2.45 0 0 1 7.05,3.55 V9.61 A3.75,3.75 0 1 1 2.15,9.61 Z" fill="none" stroke="#e2b42c" stroke-width="1.6"/><line x1="4.6" y1="4.6" x2="4.6" y2="12" stroke="#e2b42c" stroke-width="1.2"/><circle cx="4.6" cy="12.45" r="1.9" fill="#e2b42c"/><rect x="8.5" y="2.0" width="2.1" height="1.05" fill="#e2b42c"/><rect x="8.5" y="4.0" width="2.1" height="1.05" fill="#e2b42c"/><rect x="8.5" y="6.0" width="2.1" height="1.05" fill="#e2b42c"/></svg>
<div class="t" style="left:1125.60px;top:239.60px;font-size:12.4px;font-weight:400;color:#111;-webkit-text-stroke:0.3px #111;">Minimum</div>
<div class="t" style="left:1125.60px;top:257.80px;font-size:13.7px;font-weight:400;color:#111;-webkit-text-stroke:0.55px #111;">49.5 °F</div>
<svg style="position:absolute;left:1194.2px;top:243.2px;" width="14.59" height="23.4" viewBox="0 0 10.6 17"><path d="M2.15,9.61 V3.55 A2.45,2.45 0 0 1 7.05,3.55 V9.61 A3.75,3.75 0 1 1 2.15,9.61 Z" fill="none" stroke="#2ba5e6" stroke-width="1.6"/><line x1="4.6" y1="4.6" x2="4.6" y2="12" stroke="#2ba5e6" stroke-width="1.2"/><circle cx="4.6" cy="12.45" r="1.9" fill="#2ba5e6"/><rect x="8.5" y="2.0" width="2.1" height="1.05" fill="#2ba5e6"/><rect x="8.5" y="4.0" width="2.1" height="1.05" fill="#2ba5e6"/><rect x="8.5" y="6.0" width="2.1" height="1.05" fill="#2ba5e6"/></svg>
<svg style="position:absolute;left:1021.5px;top:288.5px;" width="15" height="14.5" viewBox="0 0 15 14.5"><path d="M3.2,10.2 A3,3 0 0 1 3,4.4 A4.6,4.6 0 0 1 11.4,4.2 A3,3 0 0 1 11.6,10.2 Z" fill="#2f7bea"/><g fill="#2f7bea"><circle cx="3" cy="12.2" r="0.7"/><circle cx="5.4" cy="12.6" r="0.8"/><circle cx="7.6" cy="12.2" r="0.7"/><circle cx="9.6" cy="12.6" r="0.8"/><circle cx="11.8" cy="12.2" r="0.7"/></g></svg>
<div class="t" style="left:1042.30px;top:289.57px;font-size:12.2px;font-weight:700;color:#111;">Rain</div>
<div style="position:absolute;left:1023.2px;top:304px;width:185.5px;height:1.4px;background:#a3a8ac;"></div>
<div class="t" style="left:1023.70px;top:309.40px;font-size:12.4px;font-weight:400;color:#111;-webkit-text-stroke:0.3px #111;">Rainfall</div>
<div class="t" style="left:1023.70px;top:327.05px;font-size:14px;font-weight:400;color:#111;-webkit-text-stroke:0.55px #111;">0 inch</div>
<svg style="position:absolute;left:1088.5px;top:313.5px;" width="21" height="22.5" viewBox="0 0 21 22.5"><path d="M0.8,13.3 C0.8,7 5,3 10.5,3 C16,3 20.3,7 20.3,13.3 C19.2,12.2 17.5,12.2 16.3,13.3 C15.1,12.2 13.3,12.2 12.2,13.3 C11.2,12.4 9.8,12.4 8.8,13.3 C7.7,12.2 5.9,12.2 4.7,13.3 C3.5,12.2 1.8,12.2 0.8,13.3 Z" fill="#5e95ea" stroke="#141a28" stroke-width="1.3" stroke-linejoin="round"/><path d="M10.5,13 V19.4 A2.1,2.1 0 0 1 6.6,20" fill="none" stroke="#141a28" stroke-width="1.8" stroke-linecap="round"/><g fill="#141a28"><circle cx="2" cy="4.9" r="1.35"/><circle cx="5.3" cy="2.4" r="1.35"/><circle cx="10.5" cy="2.6" r="1.15"/><circle cx="16" cy="2.4" r="1.35"/><circle cx="19.4" cy="4.9" r="1.35"/></g></svg>
<div class="t" style="left:1125.20px;top:309.67px;font-size:12.2px;font-weight:400;color:#111;-webkit-text-stroke:0.3px #111;">Cloud Cover</div>
<div class="t" style="left:1125.20px;top:327.22px;font-size:13.8px;font-weight:400;color:#111;-webkit-text-stroke:0.55px #111;">4 %</div>
<svg style="position:absolute;left:1187px;top:320px;" width="24" height="17" viewBox="0 0 24 17"><g fill="#d2d2d2"><circle cx="10.5" cy="7.5" r="7.1"/><circle cx="18.3" cy="11.6" r="5.1"/><circle cx="5.5" cy="12" r="4.8"/><rect x="5.5" y="11" width="12.8" height="5.8"/></g></svg>
<div class="t" style="left:608.60px;top:400.44px;font-size:12.24px;font-weight:700;color:#111;">Hourly Forecast (25 NOV)</div>
<div style="position:absolute;left:608px;top:416.5px;width:600px;height:1.4px;background:#94999d;"></div>
<div style="position:absolute;left:608.30px;top:421px;width:142px;height:297.5px;border-radius:5px;background:linear-gradient(180deg,#edf7fe 0%,#eaf6fe 50%,#cee9fb 100%);"></div>
<div style="position:absolute;left:759.80px;top:421px;width:142px;height:297.5px;border-radius:5px;background:linear-gradient(180deg,#edf7fe 0%,#eaf6fe 50%,#cee9fb 100%);"></div>
<div style="position:absolute;left:911.30px;top:421px;width:142px;height:297.5px;border-radius:5px;background:linear-gradient(180deg,#edf7fe 0%,#eaf6fe 50%,#cee9fb 100%);"></div>
<div style="position:absolute;left:1062.80px;top:421px;width:142px;height:297.5px;border-radius:5px;background:linear-gradient(180deg,#edf7fe 0%,#eaf6fe 50%,#cee9fb 100%);"></div>
<div class="t" style="left:479.30px;width:400px;text-align:center;top:432.50px;font-size:14.3px;font-weight:700;color:#111;">Now</div>
<div class="t" style="left:579.30px;width:200px;top:460.5px;display:flex;justify-content:center;align-items:center;height:16px"><svg width="9.35" height="15" viewBox="0 0 10.6 17" style="margin-right:10px;flex:none"><path d="M2.15,9.61 V3.55 A2.45,2.45 0 0 1 7.05,3.55 V9.61 A3.75,3.75 0 1 1 2.15,9.61 Z" fill="none" stroke="#3d7ce4" stroke-width="1.6"/><line x1="4.6" y1="4.6" x2="4.6" y2="12" stroke="#3d7ce4" stroke-width="1.2"/><circle cx="4.6" cy="12.45" r="1.9" fill="#3d7ce4"/><rect x="8.5" y="2.0" width="2.1" height="1.05" fill="#3d7ce4"/><rect x="8.5" y="4.0" width="2.1" height="1.05" fill="#3d7ce4"/><rect x="8.5" y="6.0" width="2.1" height="1.05" fill="#3d7ce4"/></svg><span style="font-size:13px;font-weight:400;color:#111;position:relative;top:2.2px;-webkit-text-stroke:0.5px #111">49.5 °F</span></div>
<div class="t" style="left:579.30px;width:200px;top:483px;display:flex;justify-content:center;align-items:center;height:14px"><span style="display:inline-block;width:12.6px;height:12.6px;border-radius:50%;background:#2ec43a;margin-right:5px"></span><span style="font-size:12.3px;font-weight:400;color:#111;position:relative;top:0.5px;-webkit-text-stroke:0.25px #111">AQI 43</span></div>
<div style="position:absolute;left:636.20px;top:529.50px;width:19.4px;height:19.4px;border-radius:50%;background:#ffe614;box-shadow:0 0.5px 3.5px rgba(80,90,100,0.45)"></div>
<div class="t" style="left:669.70px;top:532.47px;font-size:12.2px;font-weight:400;color:#2b2f33;-webkit-text-stroke:0.1px #2b2f33;">Clear Sky</div>
<div class="t" style="left:650.10px;top:583.64px;font-size:12.0px;font-weight:400;color:#111;-webkit-text-stroke:0.3px #111;">0 of 11</div>
<div class="t" style="left:650.10px;top:602.84px;font-size:12.0px;font-weight:400;color:#111;-webkit-text-stroke:0.3px #111;">4.5 mp/h</div>
<div class="t" style="left:650.10px;top:622.04px;font-size:12.0px;font-weight:400;color:#111;-webkit-text-stroke:0.3px #111;">33° NNE</div>
<div class="t" style="left:650.10px;top:640.84px;font-size:12.0px;font-weight:400;color:#111;-webkit-text-stroke:0.3px #111;">0 %&nbsp;&nbsp;0 inch</div>
<div class="t" style="left:650.10px;top:659.84px;font-size:12.0px;font-weight:400;color:#111;-webkit-text-stroke:0.3px #111;">84 %</div>
<div class="t" style="left:650.10px;top:678.84px;font-size:12.0px;font-weight:400;color:#111;-webkit-text-stroke:0.3px #111;">10.2 miles</div>
<div class="t" style="left:650.10px;top:698.07px;font-size:12.2px;font-weight:400;color:#111;-webkit-text-stroke:0.3px #111;">767.24 mmHg</div>
<svg style="position:absolute;left:626.50px;top:581.3px;" width="16" height="16" viewBox="0 0 16 16"><path fill="#3a78e0" fill-rule="evenodd" stroke="#3a78e0" stroke-width="0.7" stroke-linejoin="round" d="M8.00,1.00 L9.73,2.67 L12.11,2.34 L12.53,4.71 L14.66,5.84 L13.60,8.00 L14.66,10.16 L12.53,11.29 L12.11,13.66 L9.73,13.33 L8.00,15.00 L6.27,13.33 L3.89,13.66 L3.47,11.29 L1.34,10.16 L2.40,8.00 L1.34,5.84 L3.47,4.71 L3.89,2.34 L6.27,2.67 Z M8,3.55 A4.45,4.45 0 1 0 8,12.45 A4.45,4.45 0 1 0 8,3.55 Z"/></svg>
<svg style="position:absolute;left:625.10px;top:602.5px;" width="19" height="12.5" viewBox="0 0 19 12.5"><g fill="none" stroke="#3a78e0" stroke-width="1.15" stroke-linecap="round"><path d="M2.5,4 H10.6 A1.9,1.9 0 1 0 8.8,1.6"/><path d="M0.5,6.2 H16 A1.9,1.9 0 1 0 14.3,3.6"/><path d="M4.5,8.4 H11.4 A1.9,1.9 0 1 1 9.6,10.8"/></g></svg>
<svg style="position:absolute;left:630.30px;top:640px;" width="9.5" height="12.3" viewBox="0 0 9.5 12.3"><path d="M4.75,0.2 C6.5,3 9.3,5.6 9.3,8 A4.55,4.55 0 0 1 0.2,8 C0.2,5.6 3,3 4.75,0.2 Z" fill="#3a78e0"/></svg>
<svg style="position:absolute;left:627.00px;top:657.6px;" width="17" height="17" viewBox="0 0 17 17"><g fill="none" stroke="#3a78e0" stroke-width="1.25" stroke-linecap="round"><path d="M7.59,13.6 A6.3,6.3 0 1 1 12.78,6.85"/><path d="M2.3,6.3 A4.3,4.3 0 0 1 10.8,6.9" stroke-dasharray="2.2 1.2"/><line x1="3" y1="4.6" x2="6.3" y2="7.1" stroke-width="1.5"/></g><path d="M12.75,8.6 C13.6,10 15.6,11.6 15.6,13.2 A2.85,2.85 0 0 1 9.9,13.2 C9.9,11.6 11.9,10 12.75,8.6 Z" fill="#3a78e0"/></svg>
<svg style="position:absolute;left:627.00px;top:679px;" width="16" height="12" viewBox="0 0 16 12"><path d="M0.3,6 C2.5,2 5,0.3 8,0.3 C11,0.3 13.5,2 15.7,6 C13.5,10 11,11.7 8,11.7 C5,11.7 2.5,10 0.3,6 Z M8,2.6 A3.4,3.4 0 1 0 8,9.4 A3.4,3.4 0 1 0 8,2.6 Z" fill="#3a78e0"/><circle cx="8" cy="6" r="1.6" fill="#3a78e0"/></svg>
<svg style="position:absolute;left:627.50px;top:697.2px;" width="14" height="14" viewBox="0 0 14 14"><g fill="none" stroke="#3a78e0" stroke-width="1.3" stroke-linecap="round"><path d="M1.9,1 C2.9,2.6 2.7,4.2 1.6,6.2 C0.9,7.6 1.2,9.4 1.9,11.2"/><path d="M7.2,1 C8.2,2.6 8,4.2 6.9,6.2 C6.2,7.6 6.5,9.4 7.2,11.2"/><path d="M11,1 H13.2 V13 H11"/><line x1="12.2" y1="4.4" x2="13.2" y2="4.4"/><line x1="12.2" y1="7" x2="13.2" y2="7"/><line x1="12.2" y1="9.6" x2="13.2" y2="9.6"/></g><circle cx="1.9" cy="11.8" r="1.5" fill="#3a78e0"/><circle cx="7.2" cy="11.8" r="1.5" fill="#3a78e0"/></svg>
<div class="t" style="left:630.80px;width:400px;text-align:center;top:431.65px;font-size:15.3px;font-weight:700;color:#111;">08:00 AM</div>
<div class="t" style="left:730.80px;width:200px;top:460.5px;display:flex;justify-content:center;align-items:center;height:16px"><svg width="9.35" height="15" viewBox="0 0 10.6 17" style="margin-right:10px;flex:none"><path d="M2.15,9.61 V3.55 A2.45,2.45 0 0 1 7.05,3.55 V9.61 A3.75,3.75 0 1 1 2.15,9.61 Z" fill="none" stroke="#3d7ce4" stroke-width="1.6"/><line x1="4.6" y1="4.6" x2="4.6" y2="12" stroke="#3d7ce4" stroke-width="1.2"/><circle cx="4.6" cy="12.45" r="1.9" fill="#3d7ce4"/><rect x="8.5" y="2.0" width="2.1" height="1.05" fill="#3d7ce4"/><rect x="8.5" y="4.0" width="2.1" height="1.05" fill="#3d7ce4"/><rect x="8.5" y="6.0" width="2.1" height="1.05" fill="#3d7ce4"/></svg><span style="font-size:13px;font-weight:400;color:#111;position:relative;top:2.2px;-webkit-text-stroke:0.5px #111">52.4 °F</span></div>
<div class="t" style="left:730.80px;width:200px;top:483px;display:flex;justify-content:center;align-items:center;height:14px"><span style="display:inline-block;width:12.6px;height:12.6px;border-radius:50%;background:#2ec43a;margin-right:5px"></span><span style="font-size:12.3px;font-weight:400;color:#111;position:relative;top:0.5px;-webkit-text-stroke:0.25px #111">AQI 44</span></div>
<div style="position:absolute;left:787.70px;top:529.50px;width:19.4px;height:19.4px;border-radius:50%;background:#ffe614;box-shadow:0 0.5px 3.5px rgba(80,90,100,0.45)"></div>
<div class="t" style="left:821.20px;top:532.47px;font-size:12.2px;font-weight:400;color:#2b2f33;-webkit-text-stroke:0.1px #2b2f33;">Clear Sky</div>
<div class="t" style="left:801.60px;top:583.64px;font-size:12.0px;font-weight:400;color:#111;-webkit-text-stroke:0.3px #111;">0.25 of 11</div>
<div class="t" style="left:801.60px;top:602.84px;font-size:12.0px;font-weight:400;color:#111;-webkit-text-stroke:0.3px #111;">3.7 mp/h</div>
<div class="t" style="left:801.60px;top:622.04px;font-size:12.0px;font-weight:400;color:#111;-webkit-text-stroke:0.3px #111;">25° NNE</div>
<div class="t" style="left:801.60px;top:640.84px;font-size:12.0px;font-weight:400;color:#111;-webkit-text-stroke:0.3px #111;">0 %&nbsp;&nbsp;0 inch</div>
<div class="t" style="left:801.60px;top:659.84px;font-size:12.0px;font-weight:400;color:#111;-webkit-text-stroke:0.3px #111;">84 %</div>
<div class="t" style="left:801.60px;top:678.84px;font-size:12.0px;font-weight:400;color:#111;-webkit-text-stroke:0.3px #111;">10.3 miles</div>
<div class="t" style="left:801.60px;top:698.07px;font-size:12.2px;font-weight:400;color:#111;-webkit-text-stroke:0.3px #111;">767.84 mmHg</div>
<svg style="position:absolute;left:778.00px;top:581.3px;" width="16" height="16" viewBox="0 0 16 16"><path fill="#3a78e0" fill-rule="evenodd" stroke="#3a78e0" stroke-width="0.7" stroke-linejoin="round" d="M8.00,1.00 L9.73,2.67 L12.11,2.34 L12.53,4.71 L14.66,5.84 L13.60,8.00 L14.66,10.16 L12.53,11.29 L12.11,13.66 L9.73,13.33 L8.00,15.00 L6.27,13.33 L3.89,13.66 L3.47,11.29 L1.34,10.16 L2.40,8.00 L1.34,5.84 L3.47,4.71 L3.89,2.34 L6.27,2.67 Z M8,3.55 A4.45,4.45 0 1 0 8,12.45 A4.45,4.45 0 1 0 8,3.55 Z"/></svg>
<svg style="position:absolute;left:776.60px;top:602.5px;" width="19" height="12.5" viewBox="0 0 19 12.5"><g fill="none" stroke="#3a78e0" stroke-width="1.15" stroke-linecap="round"><path d="M2.5,4 H10.6 A1.9,1.9 0 1 0 8.8,1.6"/><path d="M0.5,6.2 H16 A1.9,1.9 0 1 0 14.3,3.6"/><path d="M4.5,8.4 H11.4 A1.9,1.9 0 1 1 9.6,10.8"/></g></svg>
<svg style="position:absolute;left:781.80px;top:640px;" width="9.5" height="12.3" viewBox="0 0 9.5 12.3"><path d="M4.75,0.2 C6.5,3 9.3,5.6 9.3,8 A4.55,4.55 0 0 1 0.2,8 C0.2,5.6 3,3 4.75,0.2 Z" fill="#3a78e0"/></svg>
<svg style="position:absolute;left:778.50px;top:657.6px;" width="17" height="17" viewBox="0 0 17 17"><g fill="none" stroke="#3a78e0" stroke-width="1.25" stroke-linecap="round"><path d="M7.59,13.6 A6.3,6.3 0 1 1 12.78,6.85"/><path d="M2.3,6.3 A4.3,4.3 0 0 1 10.8,6.9" stroke-dasharray="2.2 1.2"/><line x1="3" y1="4.6" x2="6.3" y2="7.1" stroke-width="1.5"/></g><path d="M12.75,8.6 C13.6,10 15.6,11.6 15.6,13.2 A2.85,2.85 0 0 1 9.9,13.2 C9.9,11.6 11.9,10 12.75,8.6 Z" fill="#3a78e0"/></svg>
<svg style="position:absolute;left:778.50px;top:679px;" width="16" height="12" viewBox="0 0 16 12"><path d="M0.3,6 C2.5,2 5,0.3 8,0.3 C11,0.3 13.5,2 15.7,6 C13.5,10 11,11.7 8,11.7 C5,11.7 2.5,10 0.3,6 Z M8,2.6 A3.4,3.4 0 1 0 8,9.4 A3.4,3.4 0 1 0 8,2.6 Z" fill="#3a78e0"/><circle cx="8" cy="6" r="1.6" fill="#3a78e0"/></svg>
<svg style="position:absolute;left:779.00px;top:697.2px;" width="14" height="14" viewBox="0 0 14 14"><g fill="none" stroke="#3a78e0" stroke-width="1.3" stroke-linecap="round"><path d="M1.9,1 C2.9,2.6 2.7,4.2 1.6,6.2 C0.9,7.6 1.2,9.4 1.9,11.2"/><path d="M7.2,1 C8.2,2.6 8,4.2 6.9,6.2 C6.2,7.6 6.5,9.4 7.2,11.2"/><path d="M11,1 H13.2 V13 H11"/><line x1="12.2" y1="4.4" x2="13.2" y2="4.4"/><line x1="12.2" y1="7" x2="13.2" y2="7"/><line x1="12.2" y1="9.6" x2="13.2" y2="9.6"/></g><circle cx="1.9" cy="11.8" r="1.5" fill="#3a78e0"/><circle cx="7.2" cy="11.8" r="1.5" fill="#3a78e0"/></svg>
<div class="t" style="left:782.30px;width:400px;text-align:center;top:431.65px;font-size:15.3px;font-weight:700;color:#111;">09:00 AM</div>
<div class="t" style="left:882.30px;width:200px;top:460.5px;display:flex;justify-content:center;align-items:center;height:16px"><svg width="9.35" height="15" viewBox="0 0 10.6 17" style="margin-right:10px;flex:none"><path d="M2.15,9.61 V3.55 A2.45,2.45 0 0 1 7.05,3.55 V9.61 A3.75,3.75 0 1 1 2.15,9.61 Z" fill="none" stroke="#3d7ce4" stroke-width="1.6"/><line x1="4.6" y1="4.6" x2="4.6" y2="12" stroke="#3d7ce4" stroke-width="1.2"/><circle cx="4.6" cy="12.45" r="1.9" fill="#3d7ce4"/><rect x="8.5" y="2.0" width="2.1" height="1.05" fill="#3d7ce4"/><rect x="8.5" y="4.0" width="2.1" height="1.05" fill="#3d7ce4"/><rect x="8.5" y="6.0" width="2.1" height="1.05" fill="#3d7ce4"/></svg><span style="font-size:13px;font-weight:400;color:#111;position:relative;top:2.2px;-webkit-text-stroke:0.5px #111">58.6 °F</span></div>
<div class="t" style="left:882.30px;width:200px;top:483px;display:flex;justify-content:center;align-items:center;height:14px"><span style="display:inline-block;width:12.6px;height:12.6px;border-radius:50%;background:#2ec43a;margin-right:5px"></span><span style="font-size:12.3px;font-weight:400;color:#111;position:relative;top:0.5px;-webkit-text-stroke:0.25px #111">AQI 44</span></div>
<div style="position:absolute;left:939.20px;top:529.50px;width:19.4px;height:19.4px;border-radius:50%;background:#ffe614;box-shadow:0 0.5px 3.5px rgba(80,90,100,0.45)"></div>
<div class="t" style="left:972.70px;top:532.47px;font-size:12.2px;font-weight:400;color:#2b2f33;-webkit-text-stroke:0.1px #2b2f33;">Clear Sky</div>
<div class="t" style="left:953.10px;top:583.64px;font-size:12.0px;font-weight:400;color:#111;-webkit-text-stroke:0.3px #111;">1.3 of 11</div>
<div class="t" style="left:953.10px;top:602.84px;font-size:12.0px;font-weight:400;color:#111;-webkit-text-stroke:0.3px #111;">5.4 mp/h</div>
<div class="t" style="left:953.10px;top:622.04px;font-size:12.0px;font-weight:400;color:#111;-webkit-text-stroke:0.3px #111;">30° NNE</div>
<div class="t" style="left:953.10px;top:640.84px;font-size:12.0px;font-weight:400;color:#111;-webkit-text-stroke:0.3px #111;">0 %&nbsp;&nbsp;0 inch</div>
<div class="t" style="left:953.10px;top:659.84px;font-size:12.0px;font-weight:400;color:#111;-webkit-text-stroke:0.3px #111;">76 %</div>
<div class="t" style="left:953.10px;top:678.84px;font-size:12.0px;font-weight:400;color:#111;-webkit-text-stroke:0.3px #111;">12.6 miles</div>
<div class="t" style="left:953.10px;top:698.07px;font-size:12.2px;font-weight:400;color:#111;-webkit-text-stroke:0.3px #111;">768.14 mmHg</div>
<svg style="position:absolute;left:929.50px;top:581.3px;" width="16" height="16" viewBox="0 0 16 16"><path fill="#3a78e0" fill-rule="evenodd" stroke="#3a78e0" stroke-width="0.7" stroke-linejoin="round" d="M8.00,1.00 L9.73,2.67 L12.11,2.34 L12.53,4.71 L14.66,5.84 L13.60,8.00 L14.66,10.16 L12.53,11.29 L12.11,13.66 L9.73,13.33 L8.00,15.00 L6.27,13.33 L3.89,13.66 L3.47,11.29 L1.34,10.16 L2.40,8.00 L1.34,5.84 L3.47,4.71 L3.89,2.34 L6.27,2.67 Z M8,3.55 A4.45,4.45 0 1 0 8,12.45 A4.45,4.45 0 1 0 8,3.55 Z"/></svg>
<svg style="position:absolute;left:928.10px;top:602.5px;" width="19" height="12.5" viewBox="0 0 19 12.5"><g fill="none" stroke="#3a78e0" stroke-width="1.15" stroke-linecap="round"><path d="M2.5,4 H10.6 A1.9,1.9 0 1 0 8.8,1.6"/><path d="M0.5,6.2 H16 A1.9,1.9 0 1 0 14.3,3.6"/><path d="M4.5,8.4 H11.4 A1.9,1.9 0 1 1 9.6,10.8"/></g></svg>
<svg style="position:absolute;left:933.30px;top:640px;" width="9.5" height="12.3" viewBox="0 0 9.5 12.3"><path d="M4.75,0.2 C6.5,3 9.3,5.6 9.3,8 A4.55,4.55 0 0 1 0.2,8 C0.2,5.6 3,3 4.75,0.2 Z" fill="#3a78e0"/></svg>
<svg style="position:absolute;left:930.00px;top:657.6px;" width="17" height="17" viewBox="0 0 17 17"><g fill="none" stroke="#3a78e0" stroke-width="1.25" stroke-linecap="round"><path d="M7.59,13.6 A6.3,6.3 0 1 1 12.78,6.85"/><path d="M2.3,6.3 A4.3,4.3 0 0 1 10.8,6.9" stroke-dasharray="2.2 1.2"/><line x1="3" y1="4.6" x2="6.3" y2="7.1" stroke-width="1.5"/></g><path d="M12.75,8.6 C13.6,10 15.6,11.6 15.6,13.2 A2.85,2.85 0 0 1 9.9,13.2 C9.9,11.6 11.9,10 12.75,8.6 Z" fill="#3a78e0"/></svg>
<svg style="position:absolute;left:930.00px;top:679px;" width="16" height="12" viewBox="0 0 16 12"><path d="M0.3,6 C2.5,2 5,0.3 8,0.3 C11,0.3 13.5,2 15.7,6 C13.5,10 11,11.7 8,11.7 C5,11.7 2.5,10 0.3,6 Z M8,2.6 A3.4,3.4 0 1 0 8,9.4 A3.4,3.4 0 1 0 8,2.6 Z" fill="#3a78e0"/><circle cx="8" cy="6" r="1.6" fill="#3a78e0"/></svg>
<svg style="position:absolute;left:930.50px;top:697.2px;" width="14" height="14" viewBox="0 0 14 14"><g fill="none" stroke="#3a78e0" stroke-width="1.3" stroke-linecap="round"><path d="M1.9,1 C2.9,2.6 2.7,4.2 1.6,6.2 C0.9,7.6 1.2,9.4 1.9,11.2"/><path d="M7.2,1 C8.2,2.6 8,4.2 6.9,6.2 C6.2,7.6 6.5,9.4 7.2,11.2"/><path d="M11,1 H13.2 V13 H11"/><line x1="12.2" y1="4.4" x2="13.2" y2="4.4"/><line x1="12.2" y1="7" x2="13.2" y2="7"/><line x1="12.2" y1="9.6" x2="13.2" y2="9.6"/></g><circle cx="1.9" cy="11.8" r="1.5" fill="#3a78e0"/><circle cx="7.2" cy="11.8" r="1.5" fill="#3a78e0"/></svg>
<div class="t" style="left:933.80px;width:400px;text-align:center;top:431.65px;font-size:15.3px;font-weight:700;color:#111;">10:00 AM</div>
<div class="t" style="left:1033.80px;width:200px;top:460.5px;display:flex;justify-content:center;align-items:center;height:16px"><svg width="9.35" height="15" viewBox="0 0 10.6 17" style="margin-right:10px;flex:none"><path d="M2.15,9.61 V3.55 A2.45,2.45 0 0 1 7.05,3.55 V9.61 A3.75,3.75 0 1 1 2.15,9.61 Z" fill="none" stroke="#3d7ce4" stroke-width="1.6"/><line x1="4.6" y1="4.6" x2="4.6" y2="12" stroke="#3d7ce4" stroke-width="1.2"/><circle cx="4.6" cy="12.45" r="1.9" fill="#3d7ce4"/><rect x="8.5" y="2.0" width="2.1" height="1.05" fill="#3d7ce4"/><rect x="8.5" y="4.0" width="2.1" height="1.05" fill="#3d7ce4"/><rect x="8.5" y="6.0" width="2.1" height="1.05" fill="#3d7ce4"/></svg><span style="font-size:13px;font-weight:400;color:#111;position:relative;top:2.2px;-webkit-text-stroke:0.5px #111">65.5 °F</span></div>
<div class="t" style="left:1033.80px;width:200px;top:483px;display:flex;justify-content:center;align-items:center;height:14px"><span style="display:inline-block;width:12.6px;height:12.6px;border-radius:50%;background:#2ec43a;margin-right:5px"></span><span style="font-size:12.3px;font-weight:400;color:#111;position:relative;top:0.5px;-webkit-text-stroke:0.25px #111">AQI 45</span></div>
<div style="position:absolute;left:1090.70px;top:529.50px;width:19.4px;height:19.4px;border-radius:50%;background:#ffe614;box-shadow:0 0.5px 3.5px rgba(80,90,100,0.45)"></div>
<div class="t" style="left:1124.20px;top:532.47px;font-size:12.2px;font-weight:400;color:#2b2f33;-webkit-text-stroke:0.1px #2b2f33;">Clear Sky</div>
<div class="t" style="left:1104.60px;top:583.64px;font-size:12.0px;font-weight:400;color:#111;-webkit-text-stroke:0.3px #111;">2.7 of 11</div>
<div class="t" style="left:1104.60px;top:602.84px;font-size:12.0px;font-weight:400;color:#111;-webkit-text-stroke:0.3px #111;">5.5 mp/h</div>
<div class="t" style="left:1104.60px;top:622.04px;font-size:12.0px;font-weight:400;color:#111;-webkit-text-stroke:0.3px #111;">21° NNE</div>
<div class="t" style="left:1104.60px;top:640.84px;font-size:12.0px;font-weight:400;color:#111;-webkit-text-stroke:0.3px #111;">0 %&nbsp;&nbsp;0 inch</div>
<div class="t" style="left:1104.60px;top:659.84px;font-size:12.0px;font-weight:400;color:#111;-webkit-text-stroke:0.3px #111;">61 %</div>
<div class="t" style="left:1104.60px;top:678.84px;font-size:12.0px;font-weight:400;color:#111;-webkit-text-stroke:0.3px #111;">18.2 miles</div>
<div class="t" style="left:1104.60px;top:698.07px;font-size:12.2px;font-weight:400;color:#111;-webkit-text-stroke:0.3px #111;">767.84 mmHg</div>
<svg style="position:absolute;left:1081.00px;top:581.3px;" width="16" height="16" viewBox="0 0 16 16"><path fill="#3a78e0" fill-rule="evenodd" stroke="#3a78e0" stroke-width="0.7" stroke-linejoin="round" d="M8.00,1.00 L9.73,2.67 L12.11,2.34 L12.53,4.71 L14.66,5.84 L13.60,8.00 L14.66,10.16 L12.53,11.29 L12.11,13.66 L9.73,13.33 L8.00,15.00 L6.27,13.33 L3.89,13.66 L3.47,11.29 L1.34,10.16 L2.40,8.00 L1.34,5.84 L3.47,4.71 L3.89,2.34 L6.27,2.67 Z M8,3.55 A4.45,4.45 0 1 0 8,12.45 A4.45,4.45 0 1 0 8,3.55 Z"/></svg>
<svg style="position:absolute;left:1079.60px;top:602.5px;" width="19" height="12.5" viewBox="0 0 19 12.5"><g fill="none" stroke="#3a78e0" stroke-width="1.15" stroke-linecap="round"><path d="M2.5,4 H10.6 A1.9,1.9 0 1 0 8.8,1.6"/><path d="M0.5,6.2 H16 A1.9,1.9 0 1 0 14.3,3.6"/><path d="M4.5,8.4 H11.4 A1.9,1.9 0 1 1 9.6,10.8"/></g></svg>
<svg style="position:absolute;left:1084.80px;top:640px;" width="9.5" height="12.3" viewBox="0 0 9.5 12.3"><path d="M4.75,0.2 C6.5,3 9.3,5.6 9.3,8 A4.55,4.55 0 0 1 0.2,8 C0.2,5.6 3,3 4.75,0.2 Z" fill="#3a78e0"/></svg>
<svg style="position:absolute;left:1081.50px;top:657.6px;" width="17" height="17" viewBox="0 0 17 17"><g fill="none" stroke="#3a78e0" stroke-width="1.25" stroke-linecap="round"><path d="M7.59,13.6 A6.3,6.3 0 1 1 12.78,6.85"/><path d="M2.3,6.3 A4.3,4.3 0 0 1 10.8,6.9" stroke-dasharray="2.2 1.2"/><line x1="3" y1="4.6" x2="6.3" y2="7.1" stroke-width="1.5"/></g><path d="M12.75,8.6 C13.6,10 15.6,11.6 15.6,13.2 A2.85,2.85 0 0 1 9.9,13.2 C9.9,11.6 11.9,10 12.75,8.6 Z" fill="#3a78e0"/></svg>
<svg style="position:absolute;left:1081.50px;top:679px;" width="16" height="12" viewBox="0 0 16 12"><path d="M0.3,6 C2.5,2 5,0.3 8,0.3 C11,0.3 13.5,2 15.7,6 C13.5,10 11,11.7 8,11.7 C5,11.7 2.5,10 0.3,6 Z M8,2.6 A3.4,3.4 0 1 0 8,9.4 A3.4,3.4 0 1 0 8,2.6 Z" fill="#3a78e0"/><circle cx="8" cy="6" r="1.6" fill="#3a78e0"/></svg>
<svg style="position:absolute;left:1082.00px;top:697.2px;" width="14" height="14" viewBox="0 0 14 14"><g fill="none" stroke="#3a78e0" stroke-width="1.3" stroke-linecap="round"><path d="M1.9,1 C2.9,2.6 2.7,4.2 1.6,6.2 C0.9,7.6 1.2,9.4 1.9,11.2"/><path d="M7.2,1 C8.2,2.6 8,4.2 6.9,6.2 C6.2,7.6 6.5,9.4 7.2,11.2"/><path d="M11,1 H13.2 V13 H11"/><line x1="12.2" y1="4.4" x2="13.2" y2="4.4"/><line x1="12.2" y1="7" x2="13.2" y2="7"/><line x1="12.2" y1="9.6" x2="13.2" y2="9.6"/></g><circle cx="1.9" cy="11.8" r="1.5" fill="#3a78e0"/><circle cx="7.2" cy="11.8" r="1.5" fill="#3a78e0"/></svg>
<div style="position:absolute;left:1360px;top:365px;width:2px;height:359.5px;background:#737f87;border-radius:1px;"></div>
</body></html>
